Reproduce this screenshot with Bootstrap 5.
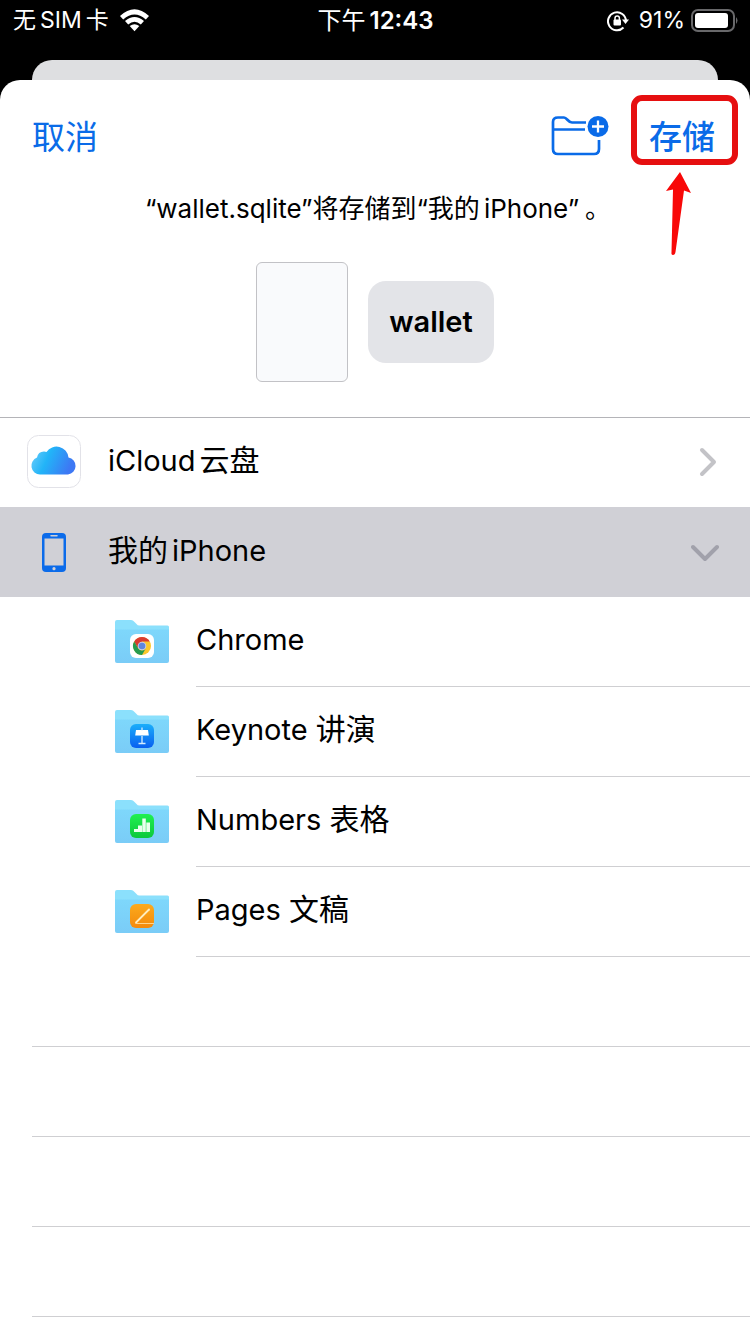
<!DOCTYPE html>
<html lang="zh-CN">
<head>
<meta charset="utf-8">
<meta name="viewport" content="width=device-width, initial-scale=1">
<title>存储到“我的 iPhone”</title>
<link href="https://cdn.jsdelivr.net/npm/bootstrap@5.3.0/dist/css/bootstrap.min.css" rel="stylesheet">
<style>
  body { background: #000; color: #000; font-family: Inter, "Noto Sans CJK SC", sans-serif; line-height: 1.2; }
  .screen { height: 100vh; min-height: 600px; }
  .status-bar { height: 60px; padding: 2px 12px 20px 13px; color: #fff; font-size: 23px; }
  .status-time { font-size: 24px; font-weight: 600; }
  .status-period { font-weight: 400; }
  .ms-latin { margin-left: 4px; }
  .me-latin { margin-right: 4px; }
  .sheet-behind { height: 40px; margin: 0 32px -20px; background: #dedfe1; border-radius: 20px 20px 0 0; }
  .sheet { background: #fff; border-radius: 20px 20px 0 0; z-index: 1; }
  .sheet-nav { height: 112px; padding: 2px 35px 0 32px; }
  .nav-action { color: #0a6be8; font-size: 33px; line-height: 40px; }
  .nav-action:hover { color: #0a58ca; }
  .nav-save { font-weight: 500; }
  .nav-folder { margin-right: 39px; }
  .callout-box { inset: -22px -23px -8px -18px; border: 6px solid #e60f10; border-radius: 11px; }
  .callout-arrow { top: 55px; left: 16px; }
  .sheet-title { padding-left: 6px; font-size: 26px; line-height: 34px; }
  .title-stop { margin-left: 6px; }
  .file-row { gap: 20px; padding: 36px 0 35px; border-bottom: 1px solid #b4b4b8; }
  .file-thumb { width: 92px; height: 120px; background: #f9fafc; border: 1px solid #c2c2c6; border-radius: 6px; }
  .file-name { height: 82px; padding: 0 21px; background: #e3e4e8; border-radius: 18px; color: #000; font-size: 29px; font-weight: 600; }
  .place { height: 90px; padding: 0 31px 0 27px; font-size: 29px; }
  .place-first { height: 89px; padding-bottom: 2px; }
  .place-label { padding-bottom: 2px; }
  .han { font-size: 30px; line-height: 1; }
  .place-icon { width: 54px; margin-right: 27px; }
  .place-open { background: #d0d0d6; }
  .folder-item { height: 90px; padding-left: 114px; font-size: 29px; }
  .folder-icon { margin-right: 26px; }
  .folder-label { padding-bottom: 2px; border-bottom: 1px solid #cfcfd2; }
  .blank-line { height: 90px; margin-left: 32px; border-bottom: 1px solid #cfcfd2; }
</style>
</head>
<body>
<div class="screen d-flex flex-column overflow-hidden">
  <header class="status-bar d-flex align-items-center flex-shrink-0">
    <div class="col d-flex align-items-center">
      <span>无</span><span class="ms-latin me-latin">SIM</span><span>卡</span>
      <svg class="ms-2" width="34" height="24" viewBox="0 0 34 24" fill="#fff" aria-label="Wi-Fi">
        <path d="M3 7Q17.500-6.500 32 7L28.800 10.500Q17.500.5 6.200 10.500Z"/>
        <path d="M8 12.100Q17.500 4 27 12.100L23.800 15.500Q17.500 10 11.200 15.500Z"/>
        <path d="M12.700 17.100Q17.500 13.500 22.300 17.100L17.500 22.300Z"/>
      </svg>
    </div>
    <div class="status-time"><span class="status-period">下午</span><span class="ms-latin">12:43</span></div>
    <div class="col d-flex align-items-center justify-content-end">
      <svg class="me-2" width="24" height="24" viewBox="0 0 24 24" fill="none" stroke="#fff" stroke-width="2" aria-label="方向锁定">
        <path d="M16.500 18.500A9 9 0 1 1 19 12"/>
        <path d="M15 10.500h7L18.500 15Z" fill="#fff" stroke="none"/>
        <rect x="6.500" y="10.500" width="7.500" height="6" rx="1" fill="#fff" stroke="none"/>
        <path d="M8 11.500V9.300a2.200 2.200 0 0 1 4.400 0v1.700" stroke-width="1.500"/>
      </svg>
      <span>91%</span>
      <svg class="ms-1" width="49" height="24" viewBox="0 0 49 24" aria-label="电池">
        <rect x="3" y="1" width="42" height="21" rx="6" fill="none" stroke="#68686a" stroke-width="2"/>
        <rect x="6" y="4" width="33" height="15" rx="3" fill="#fff"/>
        <path d="M47 8q3 3.500 0 7Z" fill="#68686a"/>
      </svg>
    </div>
  </header>
  <div class="sheet-behind flex-shrink-0"></div>
  <main class="sheet flex-grow-1 overflow-hidden">
    <nav class="sheet-nav d-flex align-items-center" aria-label="操作">
      <button type="button" class="btn nav-action border-0 p-0 me-auto">取消</button>
      <button type="button" class="btn nav-folder border-0 p-0 lh-1" aria-label="新建文件夹">
        <svg width="60" height="42" viewBox="0 0 60 42" fill="none" stroke="#0a6be8" stroke-width="2.700">
          <path d="M36 6.500H22c-4 0-5-5-8-5H8C4.500 1.500 3 3 3 6v27c0 3.500 1.500 5 5 5h36c3.500 0 5-1.500 5-5V24M3 13.500H35"/>
          <circle cx="48" cy="10.500" r="10.500" fill="#0a6be8" stroke="none"/>
          <path d="M48 4.500v12M42 10.500h12" stroke="#fff" stroke-width="2.300"/>
        </svg>
      </button>
      <div class="position-relative">
        <button type="button" class="btn nav-action nav-save border-0 p-0">存储</button>
        <span class="callout-box position-absolute pe-none"></span>
        <svg class="callout-arrow position-absolute pe-none" width="28" height="84" viewBox="0 0 28 84" fill="#f80808" aria-hidden="true">
          <path d="M15 0L26 21 19 18.500 10.500 80Q10 83 8 83T6.500 80L8 17.500 1 19Z"/>
        </svg>
      </div>
    </nav>
    <h1 class="sheet-title text-center fw-normal mb-0">“wallet.sqlite”将存储到“我的<span class="ms-latin">iPhone</span>”<span class="title-stop">。</span></h1>
    <div class="file-row d-flex justify-content-center align-items-center">
      <div class="file-thumb"></div>
      <button type="button" class="btn file-name border-0">wallet</button>
    </div>
    <a href="#icloud" class="place place-first d-flex align-items-center text-reset text-decoration-none">
      <svg class="place-icon" width="54" height="54" viewBox="0 0 54 54">
        <defs>
          <linearGradient id="cloud" x1="0" y1="0" x2="1" y2=".3"><stop offset="0" stop-color="#74d0fa"/><stop offset=".45" stop-color="#22b4f8"/><stop offset="1" stop-color="#3d78f4"/></linearGradient>
        </defs>
        <rect x=".5" y=".5" width="53" height="52" rx="11" fill="#fff" stroke="#e2e2e8"/>
        <path d="M13 39.500A8.800 8.800 0 0 1 10 22.500Q11 16.500 17 16.500Q18.500 16.500 19.500 17A12 12 0 0 1 41.500 22.500A8.600 8.600 0 0 1 41 39.500Z" fill="url(#cloud)"/>
      </svg>
      <span>iCloud<span class="ms-latin han">云盘</span></span>
      <svg class="ms-auto" width="22" height="32" viewBox="0 0 22 32" fill="none" stroke="#c3c3c7" stroke-width="4" stroke-linecap="round" stroke-linejoin="round"><path d="M5 4l12 12L5 28"/></svg>
    </a>
    <a href="#iphone" class="place place-open d-flex align-items-center text-reset text-decoration-none" aria-expanded="true">
      <svg class="place-icon" width="54" height="42" viewBox="0 0 54 42">
        <rect x="15" y="2" width="24" height="39" rx="4" fill="#0b6bea"/>
        <path d="M17.500 7.500h19v27h-19Z" fill="#d0d0d6"/>
        <path d="M24 4.800h6" stroke="#d0d0d6" stroke-width="1.500" stroke-linecap="round"/>
        <circle cx="27" cy="37.700" r="1.600" fill="#d0d0d6"/>
      </svg>
      <span class="place-label"><span class="han">我的</span><span class="ms-latin">iPhone</span></span>
      <svg class="ms-auto" width="28" height="22" viewBox="0 0 28 22" fill="none" stroke="#a1a1ab" stroke-width="4" stroke-linecap="round" stroke-linejoin="round"><path d="M2 6l12 12L26 6"/></svg>
    </a>
    <ul class="list-unstyled mb-0">
      <li class="folder-item d-flex align-items-center">
        <svg class="folder-icon flex-shrink-0" width="56" height="48" viewBox="0 0 56 48">
          <defs>
            <linearGradient id="front" x2="0" y2="1"><stop offset="0" stop-color="#7ed7fb"/><stop offset="1" stop-color="#7accf7"/></linearGradient>
            <g id="folder">
              <path d="M1 43V4q0-2 2-2h14q2 0 3.500 2l2 2q1 1.500 3 1.500h28q1.500 0 1.500 1.500V20Z" fill="#8be0fc"/>
              <path d="M1 11.500h54V43q0 2-2 2H3q-2 0-2-2Z" fill="url(#front)"/>
            </g>
          </defs>
          <use href="#folder"/>
          <rect x="16" y="16" width="24" height="24" rx="6" fill="#fff"/>
          <circle cx="28" cy="28" r="9" fill="#fbc72c"/>
          <path d="M20.200 23.500A9 9 0 0 1 35.800 23.500H28L24.100 30.250Z" fill="#d93c30"/>
          <path d="M20.200 23.500L24.100 30.250A4.500 4.500 0 0 0 31.900 30.250L28 37A9 9 0 0 1 20.200 23.500Z" fill="#269b50"/>
          <circle cx="28" cy="28" r="4.300" fill="#c8cde8"/>
          <circle cx="28" cy="28" r="3.300" fill="#5f86de"/>
        </svg>
        <span class="folder-label flex-grow-1 h-100 d-flex align-items-center">Chrome</span>
      </li>
      <li class="folder-item d-flex align-items-center">
        <svg class="folder-icon flex-shrink-0" width="56" height="48" viewBox="0 0 56 48">
          <defs><linearGradient id="keynote" x2="0" y2="1"><stop offset="0" stop-color="#1aaefa"/><stop offset="1" stop-color="#085ff0"/></linearGradient></defs>
          <use href="#folder"/>
          <rect x="16" y="16" width="24" height="24" rx="6" fill="url(#keynote)"/>
          <path d="M22 22h12l.8 5.500H21.200Z" fill="#fff"/>
          <path d="M28 19.500v3M28 28v7.500M24.500 35.500h7" stroke="#d5edff" stroke-width="1.300"/>
        </svg>
        <span class="folder-label flex-grow-1 h-100 d-flex align-items-center"><span>Keynote <span class="han">讲演</span></span></span>
      </li>
      <li class="folder-item d-flex align-items-center">
        <svg class="folder-icon flex-shrink-0" width="56" height="48" viewBox="0 0 56 48">
          <defs><linearGradient id="numbers" x2="0" y2="1"><stop offset="0" stop-color="#20f050"/><stop offset="1" stop-color="#0cc83c"/></linearGradient></defs>
          <use href="#folder"/>
          <rect x="16" y="16" width="24" height="24" rx="6" fill="url(#numbers)"/>
          <path d="M20 31h4v3h-4ZM24 27.500h4V34h-4ZM28.300 20.500h3.500V34h-3.500ZM32.300 24.500H36V34h-3.700Z" fill="#eaffee"/>
        </svg>
        <span class="folder-label flex-grow-1 h-100 d-flex align-items-center"><span>Numbers <span class="han">表格</span></span></span>
      </li>
      <li class="folder-item d-flex align-items-center">
        <svg class="folder-icon flex-shrink-0" width="56" height="48" viewBox="0 0 56 48">
          <defs><linearGradient id="pages" x2="0" y2="1"><stop offset="0" stop-color="#fbaa1c"/><stop offset="1" stop-color="#f48a0c"/></linearGradient></defs>
          <use href="#folder"/>
          <rect x="16" y="16" width="24" height="24" rx="6" fill="url(#pages)"/>
          <path d="M22 34.500L35 21.500" stroke="#ffeec0" stroke-width="1.800" stroke-linecap="round"/>
          <path d="M21.500 35.500H40" stroke="#ffd48a" stroke-width="1"/>
        </svg>
        <span class="folder-label flex-grow-1 h-100 d-flex align-items-center"><span>Pages <span class="han">文稿</span></span></span>
      </li>
    </ul>
    <div class="blank-line"></div>
    <div class="blank-line"></div>
    <div class="blank-line"></div>
    <div class="blank-line"></div>
  </main>
</div>
<script src="https://cdn.jsdelivr.net/npm/bootstrap@5.3.0/dist/js/bootstrap.bundle.min.js"></script>
</body>
</html>
